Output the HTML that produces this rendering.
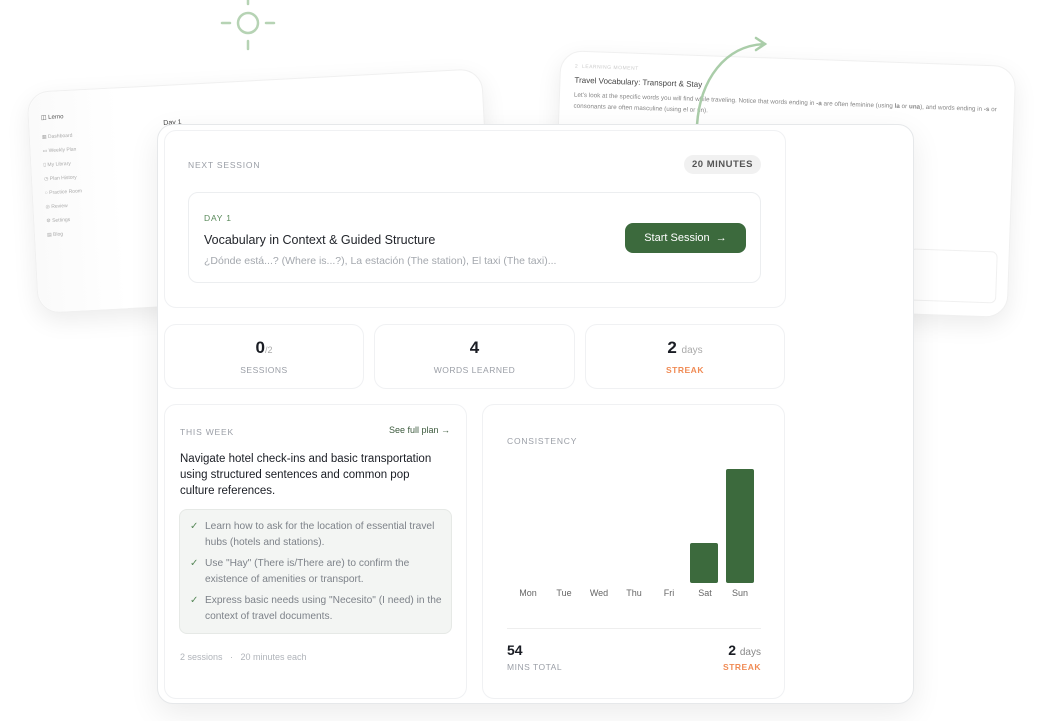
<!DOCTYPE html>
<html><head><meta charset="utf-8"><style>
*{margin:0;padding:0;box-sizing:border-box}
body{width:1040px;height:721px;background:#fff;font-family:"Liberation Sans",sans-serif;position:relative;overflow:hidden;color:#1a1d24}
.a{position:absolute}
.card{position:absolute;background:#fff;border:1px solid #eceef0;border-radius:12px}
.lbl{font-size:8.5px;letter-spacing:.8px;color:#9a9ea6;text-transform:uppercase}
.side div{font-size:5px;color:#aaa;margin-bottom:8px}
</style></head><body>
<svg class="a" style="left:218px;top:0" width="60" height="52"><g stroke="#b6d3b4" stroke-width="2.5" fill="none" stroke-linecap="round"><circle cx="30" cy="23" r="10"/><path d="M30 0v4M30 41v8M4 23h8M48 23h8"/></g></svg>
<!-- back left card -->
<div class="a" style="left:32px;top:80px;width:456px;height:222px;background:#fff;border-radius:22px;transform:rotate(-3deg);box-shadow:0 8px 24px rgba(0,0,0,.08);border:1px solid #f0f0f0">
 <div class="a" style="left:0;top:0;width:90px;height:100%;background:linear-gradient(90deg,#fafafa,#fff);border-radius:22px 0 0 22px"></div>
 <div class="a" style="left:12px;top:22px;font-size:6px;color:#555">◫ Lerno</div>
 <div class="a side" style="left:12px;top:42px"><div>▦ Dashboard</div><div>▭ Weekly Plan</div><div>▯ My Library</div><div>◷ Plan History</div><div>○ Practice Room</div><div>◎ Review</div><div>⚙ Settings</div><div>▤ Blog</div></div>
 <div class="a" style="left:134px;top:34px;font-size:7px;color:#444">Day 1</div>
</div>
<!-- back right card -->
<div class="a" style="left:556px;top:58px;width:456px;height:252px;background:#fff;border-radius:22px;transform:rotate(2deg);box-shadow:0 8px 24px rgba(0,0,0,.08);border:1px solid #f0f0f0">
 <div class="a" style="left:14px;top:12px;font-size:5px;color:#ccc;letter-spacing:.5px">2 &nbsp;LEARNING MOMENT</div>
 <div class="a" style="left:14px;top:24px;font-size:8px;color:#444">Travel Vocabulary: Transport &amp; Stay</div>
 <div class="a" style="left:14px;top:38px;width:440px;font-size:6.3px;line-height:11px;color:#888">Let's look at the specific words you will find while traveling. Notice that words ending in <b>-a</b> are often feminine (using <b>la</b> or <b>una</b>), and words ending in <b>-s</b> or consonants are often masculine (using el or un).</div>
 <div class="a" style="left:355px;top:185px;width:88px;height:52px;border:1px solid #f0f0f0;border-radius:6px"></div>
</div>
<svg class="a" style="left:690px;top:30px" width="90" height="100"><g stroke="#aacda9" stroke-width="2.5" fill="none" stroke-linecap="round"><path d="M7 95C10 50 35 15 75 14"/><path d="M66 8l9 6-9 6"/></g></svg>
<!-- main card -->
<div class="a" style="left:157px;top:124px;width:757px;height:580px;background:#fff;border:1px solid #e6e8ea;border-radius:16px;box-shadow:0 10px 30px rgba(0,0,0,.08)"></div>
<div class="card" style="left:164px;top:130px;width:622px;height:178px;border-color:#f0f1f3"></div>
<div class="a lbl" style="left:188px;top:160px">Next Session</div>
<div class="a" style="left:684px;top:155px;width:77px;height:19px;background:#f1f1f1;border-radius:10px;font-size:9.5px;font-weight:bold;color:#555;text-align:center;line-height:19px;letter-spacing:.5px">20 MINUTES</div>
<div class="card" style="left:188px;top:192px;width:573px;height:91px;border-radius:10px"></div>
<div class="a" style="left:204px;top:213px;font-size:8.5px;color:#5a8a5b;letter-spacing:.8px">DAY 1</div>
<div class="a" style="left:204px;top:233px;font-size:12.5px;color:#22252b">Vocabulary in Context &amp; Guided Structure</div>
<div class="a" style="left:204px;top:255px;font-size:10.5px;color:#a4a8ae">¿Dónde está...? (Where is...?), La estación (The station), El taxi (The taxi)...</div>
<div class="a" style="left:625px;top:223px;width:121px;height:30px;background:#3c6a3d;border-radius:8px;color:#fff;font-size:11px;line-height:30px;text-align:center">Start Session &nbsp;→</div>
<!-- stats -->
<div class="card" style="left:164px;top:324px;width:200px;height:65px;border-color:#f0f1f3"></div>
<div class="card" style="left:374px;top:324px;width:201px;height:65px;border-color:#f0f1f3"></div>
<div class="card" style="left:585px;top:324px;width:200px;height:65px;border-color:#f0f1f3"></div>
<div class="a" style="left:164px;top:338px;width:200px;text-align:center;font-size:17px;font-weight:bold">0<span style="font-size:9px;color:#aaa;font-weight:normal">/2</span></div>
<div class="a lbl" style="left:164px;top:365px;width:200px;text-align:center;letter-spacing:.5px">Sessions</div>
<div class="a" style="left:374px;top:338px;width:201px;text-align:center;font-size:17px;font-weight:bold">4</div>
<div class="a lbl" style="left:374px;top:365px;width:201px;text-align:center;letter-spacing:.5px">Words Learned</div>
<div class="a" style="left:585px;top:338px;width:200px;text-align:center;font-size:17px;font-weight:bold">2 <span style="font-size:10px;color:#aaa;font-weight:normal">days</span></div>
<div class="a lbl" style="left:585px;top:365px;width:200px;text-align:center;color:#f08b55;font-weight:bold;letter-spacing:.5px">Streak</div>
<!-- this week -->
<div class="card" style="left:164px;top:404px;width:303px;height:295px;border-color:#f0f1f3"></div>
<div class="a lbl" style="left:180px;top:427px">This Week</div>
<div class="a" style="left:389px;top:425px;font-size:9px;color:#3c5a3d">See full plan →</div>
<div class="a" style="left:180px;top:451px;width:262px;font-size:11.5px;line-height:16px;color:#1a1d24">Navigate hotel check-ins and basic transportation using structured sentences and common pop culture references.</div>
<div class="a" style="left:179px;top:509px;width:273px;height:125px;background:#f3f5f3;border:1px solid #e6e9e6;border-radius:8px"></div>
<div class="a" style="left:190px;top:519px;width:258px;font-size:10.2px;line-height:16px;color:#7d8289">
<div style="position:relative;padding-left:15px;margin-bottom:5px"><span style="position:absolute;left:0;color:#5a8a5b">✓</span>Learn how to ask for the location of essential travel hubs (hotels and stations).</div>
<div style="position:relative;padding-left:15px;margin-bottom:5px"><span style="position:absolute;left:0;color:#5a8a5b">✓</span>Use "Hay" (There is/There are) to confirm the existence of amenities or transport.</div>
<div style="position:relative;padding-left:15px"><span style="position:absolute;left:0;color:#5a8a5b">✓</span>Express basic needs using "Necesito" (I need) in the context of travel documents.</div></div>
<div class="a" style="left:180px;top:652px;font-size:9px;color:#b0b4ba">2 sessions &nbsp;&nbsp;· &nbsp;&nbsp;20 minutes each</div>
<!-- consistency -->
<div class="card" style="left:482px;top:404px;width:303px;height:295px;border-color:#f0f1f3"></div>
<div class="a lbl" style="left:507px;top:436px">Consistency</div>
<div class="a" style="left:690px;top:543px;width:28px;height:40px;background:#3c6a3d;border-radius:2px"></div>
<div class="a" style="left:726px;top:469px;width:28px;height:114px;background:#3c6a3d;border-radius:2px"></div>
<div class="a" style="left:508px;top:588px;font-size:9px;color:#666;width:252px">
<span class="a" style="left:0;width:40px;text-align:center">Mon</span><span class="a" style="left:36px;width:40px;text-align:center">Tue</span><span class="a" style="left:71px;width:40px;text-align:center">Wed</span><span class="a" style="left:106px;width:40px;text-align:center">Thu</span><span class="a" style="left:141px;width:40px;text-align:center">Fri</span><span class="a" style="left:177px;width:40px;text-align:center">Sat</span><span class="a" style="left:212px;width:40px;text-align:center">Sun</span></div>
<div class="a" style="left:507px;top:628px;width:254px;height:1px;background:#eee"></div>
<div class="a" style="left:507px;top:642px;font-size:14px;font-weight:bold">54</div>
<div class="a lbl" style="left:507px;top:662px;letter-spacing:.5px">Mins Total</div>
<div class="a" style="left:661px;top:642px;width:100px;text-align:right;font-size:14px;font-weight:bold">2 <span style="font-size:10px;color:#888;font-weight:normal">days</span></div>
<div class="a lbl" style="left:661px;top:662px;width:100px;text-align:right;color:#f08b55;font-weight:bold;letter-spacing:.5px">Streak</div>
</body></html>
